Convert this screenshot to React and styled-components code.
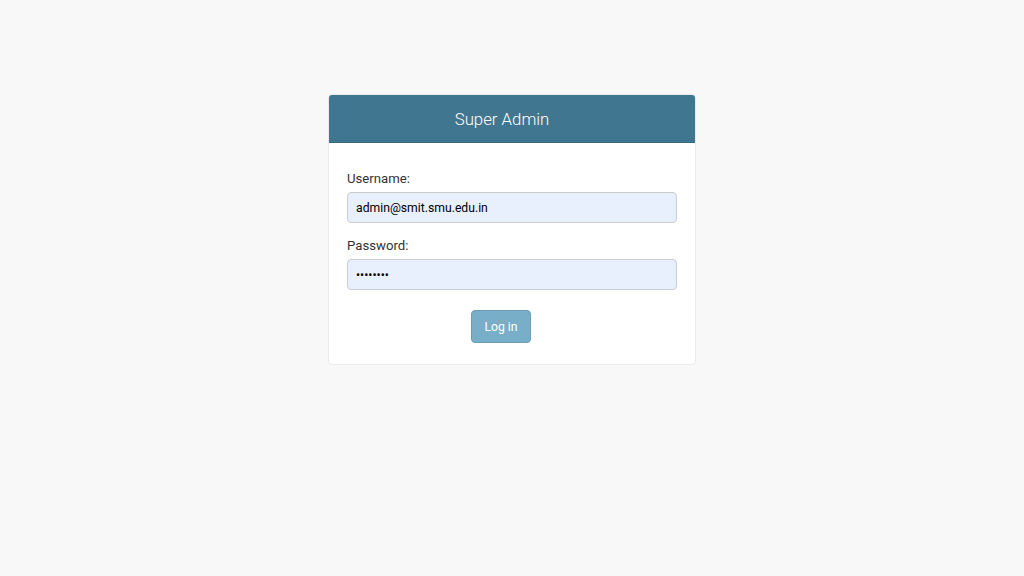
import React from "react";
import styled, { createGlobalStyle } from "styled-components";

const GlobalStyle = createGlobalStyle`
  html, body {
    margin: 0;
    padding: 0;
    background: #f8f8f8;
    font-family: Roboto, "Liberation Sans", Arial, sans-serif;
  }
`;

const Page = styled.div`
  min-height: 576px;
  display: flex;
  justify-content: center;
  align-items: flex-start;
  padding-top: 94px;
  box-sizing: border-box;
`;

const Card = styled.div`
  width: 368px;
  background: #fff;
  border: 1px solid #eaeaea;
  border-radius: 4px;
  overflow: hidden;
  box-sizing: border-box;
`;

const Header = styled.div`
  height: 48px;
  background: #417690;
  border-bottom: 1px solid #3a6a82;
  box-sizing: border-box;
  display: flex;
  align-items: center;
  justify-content: center;
  padding-right: 20px;
  color: #fff;
  font-size: 16.8px;
  font-weight: 300;
`;

const Form = styled.form`
  padding: 27px 18px 21px 18px;
  display: flex;
  flex-direction: column;
`;

const Row = styled.div`
  display: flex;
  flex-direction: column;
  margin-bottom: ${(p) => p.gap || 0}px;
`;

const Label = styled.label`
  font-size: 13.2px;
  color: #333;
  line-height: 18px;
  margin-bottom: 4px;
`;

const Input = styled.input`
  height: 31px;
  box-sizing: border-box;
  background: #e8f0fe;
  border: 1px solid #cccccc;
  border-radius: 4px;
  padding: 0 8px;
  font-family: Roboto, "Liberation Sans", Arial, sans-serif;
  font-size: 12.2px;
  color: #000;
  outline: none;
`;

const Actions = styled.div`
  display: flex;
  justify-content: center;
  margin-top: 20px;
  padding-right: 22px;
`;

const Button = styled.button`
  width: 60px;
  height: 33px;
  background: #79aec8;
  border: 1px solid #6c9db5;
  border-radius: 4px;
  color: #fff;
  font-family: Roboto, "Liberation Sans", Arial, sans-serif;
  font-size: 12.2px;
  cursor: pointer;
`;

export default function App() {
  return (
    <>
      <GlobalStyle />
      <Page>
        <Card>
          <Header>Super Admin</Header>
          <Form onSubmit={(e) => e.preventDefault()}>
            <Row gap={14}>
              <Label htmlFor="username">Username:</Label>
              <Input id="username" type="text" defaultValue="admin@smit.smu.edu.in" />
            </Row>
            <Row>
              <Label htmlFor="password">Password:</Label>
              <Input id="password" type="password" defaultValue="password" />
            </Row>
            <Actions>
              <Button type="submit">Log in</Button>
            </Actions>
          </Form>
        </Card>
      </Page>
    </>
  );
}
